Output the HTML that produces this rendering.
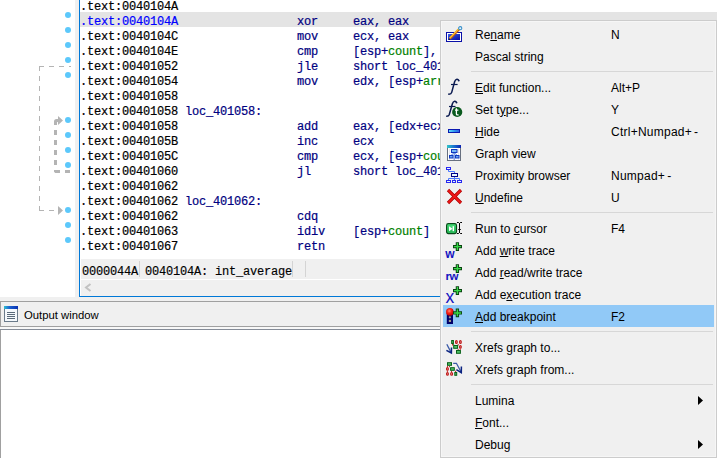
<!DOCTYPE html>
<html><head><meta charset="utf-8">
<style>
*{margin:0;padding:0;box-sizing:border-box}
html,body{width:717px;height:458px;overflow:hidden;background:#fff;position:relative}
.a{position:absolute}
#code{left:80px;top:0;width:637px;height:259px;background:#fff}
.row{position:absolute;left:80px;height:15px;width:637px;font-family:"Liberation Mono",monospace;font-size:12px;letter-spacing:-0.2px;line-height:15px;white-space:pre;color:#000;-webkit-text-stroke:0.2px}
.row span{position:absolute;top:3px}
.hl{background:#e4e4e4}
.ad{left:0}
.hlad{color:#0000ff}
.nv{color:#000080}
.gr{color:#008000}
.dot{position:absolute;left:65px;width:6px;height:6px;border-radius:50%;background:#5cc8fb}
.menu{left:440px;top:20px;width:277px;height:438px;background:#f0f0f0;border:1px solid #cccccc;box-shadow:inset 0 0 0 1px #f6f6f6;font-family:"Liberation Sans",sans-serif;font-size:12px;color:#000}
.mi{position:absolute;left:2px;width:271px;height:22px}
.mi .t{position:absolute;left:32px;top:4px;white-space:pre}
.mi .k{position:absolute;left:168px;top:4px;white-space:pre}
.mi u{text-decoration:underline;text-decoration-thickness:1px;text-underline-offset:1px}
.sep{position:absolute;left:30px;width:242px;height:1px;background:#d7d7d7}
.ic{position:absolute;overflow:visible}
.hi{background:#91c9f7}
.arr{position:absolute;left:255px;top:7px}
.mi{line-height:22px}
.mi .t,.mi .k{top:1px}
</style></head><body>
<!-- left gray strip and blue border -->
<div class="a" style="left:75px;top:0;width:4px;height:301px;background:#f0f0f0"></div>
<div class="a" style="left:79px;top:0;width:1px;height:297px;background:#0078d7"></div>
<div class="a" style="left:79px;top:296px;width:638px;height:1px;background:#0078d7"></div>
<!-- status bar -->
<div class="a" style="left:81px;top:259px;width:636px;height:20px;background:#f0f0f0"></div>
<div class="a" style="left:81px;top:280px;width:636px;height:16px;background:#f0f0f0"></div>
<div class="a" style="left:139px;top:261px;width:1px;height:16px;background:#d4d4d4"></div>
<div class="a" style="left:292px;top:261px;width:1px;height:16px;background:#d4d4d4"></div>
<div class="a" style="left:305px;top:261px;width:1px;height:16px;background:#d4d4d4"></div>
<div class="a" style="left:82px;top:265px;font-family:'Liberation Mono',monospace;font-size:12px;letter-spacing:-0.2px;font-weight:normal;-webkit-text-stroke:0.15px #000;line-height:15px;white-space:pre;color:#000">0000044A</div>
<div class="a" style="left:145px;top:265px;font-family:'Liberation Mono',monospace;font-size:12px;letter-spacing:-0.2px;font-weight:normal;-webkit-text-stroke:0.15px #000;line-height:15px;white-space:pre;color:#000">0040104A: int_average</div>
<svg class="a" style="left:84px;top:283px" width="8" height="9"><path d="M6.5 1 L2 4.5 L6.5 8" fill="none" stroke="#c2c2c2" stroke-width="2"/></svg>

<!-- code rows -->
<div class="row" style="top:-3px"><span class="ad">.text:0040104A</span></div>
<div class="row hl" style="top:12px"><span class="ad hlad">.text:0040104A</span><span class="nv" style="left:217px">xor</span><span class="nv" style="left:273px">eax, eax</span></div>
<div class="row" style="top:27px"><span class="ad">.text:0040104C</span><span class="nv" style="left:217px">mov</span><span class="nv" style="left:273px">ecx, eax</span></div>
<div class="row" style="top:42px"><span class="ad">.text:0040104E</span><span class="nv" style="left:217px">cmp</span><span class="nv" style="left:273px">[esp+<span class="gr" style="position:static">count</span>], 0</span></div>
<div class="row" style="top:57px"><span class="ad">.text:00401052</span><span class="nv" style="left:217px">jle</span><span class="nv" style="left:273px">short loc_401062</span></div>
<div class="row" style="top:72px"><span class="ad">.text:00401054</span><span class="nv" style="left:217px">mov</span><span class="nv" style="left:273px">edx, [esp+<span class="gr" style="position:static">arr</span>]</span></div>
<div class="row" style="top:87px"><span class="ad">.text:00401058</span></div>
<div class="row" style="top:102px"><span class="ad">.text:00401058</span><span class="nv" style="left:105px">loc_401058:</span></div>
<div class="row" style="top:117px"><span class="ad">.text:00401058</span><span class="nv" style="left:217px">add</span><span class="nv" style="left:273px">eax, [edx+ecx*4]</span></div>
<div class="row" style="top:132px"><span class="ad">.text:0040105B</span><span class="nv" style="left:217px">inc</span><span class="nv" style="left:273px">ecx</span></div>
<div class="row" style="top:147px"><span class="ad">.text:0040105C</span><span class="nv" style="left:217px">cmp</span><span class="nv" style="left:273px">ecx, [esp+<span class="gr" style="position:static">count</span>]</span></div>
<div class="row" style="top:162px"><span class="ad">.text:00401060</span><span class="nv" style="left:217px">jl</span><span class="nv" style="left:273px">short loc_401058</span></div>
<div class="row" style="top:177px"><span class="ad">.text:00401062</span></div>
<div class="row" style="top:192px"><span class="ad">.text:00401062</span><span class="nv" style="left:105px">loc_401062:</span></div>
<div class="row" style="top:207px"><span class="ad">.text:00401062</span><span class="nv" style="left:217px">cdq</span></div>
<div class="row" style="top:222px"><span class="ad">.text:00401063</span><span class="nv" style="left:217px">idiv</span><span class="nv" style="left:273px">[esp+<span class="gr" style="position:static">count</span>]</span></div>
<div class="row" style="top:237px"><span class="ad">.text:00401067</span><span class="nv" style="left:217px">retn</span></div>

<!-- dots -->
<div class="dot" style="top:12px"></div>
<div class="dot" style="top:27px"></div>
<div class="dot" style="top:42px"></div>
<div class="dot" style="top:57px"></div>
<div class="dot" style="top:72px"></div>
<div class="dot" style="top:117px"></div>
<div class="dot" style="top:132px"></div>
<div class="dot" style="top:147px"></div>
<div class="dot" style="top:162px"></div>
<div class="dot" style="top:207px"></div>
<div class="dot" style="top:222px"></div>
<div class="dot" style="top:237px"></div>

<!-- arrows -->
<svg class="a" style="left:0;top:0" width="75" height="260">
  <g fill="#b4b4b4">
    <!-- outer dashed 1px -->
    <rect x="39" y="66" width="5" height="1"/><rect x="49" y="66" width="5" height="1"/><rect x="59" y="66" width="5" height="1"/><rect x="69" y="66" width="2" height="1"/>
    <rect x="39" y="66" width="1" height="5"/>
    <rect x="39" y="76" width="1" height="5"/><rect x="39" y="86" width="1" height="5"/><rect x="39" y="96" width="1" height="5"/><rect x="39" y="106" width="1" height="5"/><rect x="39" y="116" width="1" height="5"/><rect x="39" y="126" width="1" height="5"/><rect x="39" y="136" width="1" height="5"/><rect x="39" y="146" width="1" height="5"/><rect x="39" y="156" width="1" height="5"/><rect x="39" y="166" width="1" height="5"/><rect x="39" y="176" width="1" height="5"/><rect x="39" y="186" width="1" height="5"/><rect x="39" y="196" width="1" height="5"/><rect x="39" y="206" width="1" height="5"/>
    <rect x="39" y="210" width="5" height="1"/><rect x="49" y="210" width="5" height="1"/>
    <path d="M58 206 L63 210.5 L58 215 Z"/>
    <!-- inner thick dashed -->
    <path d="M54 125 L54 121.5 Q54 119 56.5 119 L58 119 L58 122 L57.5 122 Q57 122 57 122.5 L57 125 Z"/>
    <path d="M58 116 L63 120.5 L58 125 Z"/>
    <rect x="54" y="130" width="3" height="5"/><rect x="54" y="140" width="3" height="5"/><rect x="54" y="150" width="3" height="5"/><rect x="54" y="160" width="3" height="5"/>
    <path d="M54 170 L60 170 L60 173 L55.2 173 L54 171.8 Z"/><rect x="65" y="170" width="5" height="3"/>
  </g>
</svg>

<!-- output window -->
<div class="a" style="left:0;top:297px;width:717px;height:4px;background:#f0f0f0"></div>
<div class="a" style="left:0;top:301px;width:717px;height:1px;background:#a0a0a0"></div>
<div class="a" style="left:0;top:302px;width:717px;height:24px;background:#f0f0f0"></div>
<div class="a" style="left:0;top:301px;width:1px;height:26px;background:#a0a0a0"></div>
<div class="a" style="left:0;top:326px;width:717px;height:1px;background:#a0a0a0"></div>
<div class="a" style="left:0;top:327px;width:717px;height:2px;background:#f8f8f8"></div>
<div class="a" style="left:0;top:329px;width:717px;height:1px;background:#858c98"></div>
<div class="a" style="left:0;top:330px;width:1px;height:128px;background:#a0a0a0"></div>
<svg class="a" style="left:4px;top:306px" width="15" height="17">
  <rect x="0.5" y="0.5" width="13" height="15" fill="#f4f8fc" stroke="#6a7a8a"/>
  <defs><linearGradient id="og" x1="0" x2="1"><stop offset="0" stop-color="#30c0d0"/><stop offset="0.4" stop-color="#1a60d0"/><stop offset="1" stop-color="#0a30b0"/></linearGradient></defs><rect x="0" y="0" width="14" height="3" fill="url(#og)"/>
  <rect x="3" y="6" width="8" height="1" fill="#5a6a7a"/><rect x="3" y="8" width="8" height="1" fill="#5a6a7a"/><rect x="3" y="10" width="8" height="1" fill="#5a6a7a"/><rect x="3" y="12" width="8" height="1" fill="#5a6a7a"/>
</svg>
<div class="a" style="left:24px;top:309px;font-family:'Liberation Sans',sans-serif;font-size:11.3px;color:#000;white-space:pre">Output window</div>

<!-- context menu -->
<div class="a menu">
<div class="mi" style="top:2px"><svg class="ic" style="left:3px;top:3px" width="18" height="17" viewBox="0 0 18 17">
<defs><linearGradient id="rng" x1="0" y1="0" x2="1" y2="1"><stop offset="0" stop-color="#3a60e8"/><stop offset="1" stop-color="#0808a0"/></linearGradient></defs>
<rect x="0" y="6" width="16" height="10" fill="#0a10a8"/>
<rect x="1" y="7" width="14" height="8" fill="#fff"/>
<rect x="2" y="8" width="12" height="6" fill="url(#rng)"/>
<line x1="3.8" y1="12.6" x2="13.4" y2="3" stroke="#c85808" stroke-width="2.4"/>
<line x1="3.6" y1="12.2" x2="13.0" y2="2.6" stroke="#f8c030" stroke-width="1.4"/>
<path d="M2.6 14 L3 12.4 L4.4 13.4 Z" fill="#101010"/>
<circle cx="14.2" cy="2.2" r="1.6" fill="#e8f4ff" stroke="#3a90c8" stroke-width="1.1"/>
</svg><span class="t">Re<u>n</u>ame</span><span class="k">N</span></div>
<div class="mi" style="top:24px"><span class="t">Pascal string</span></div>
<div class="sep" style="top:50px"></div>
<div class="mi" style="top:55px"><svg class="ic" style="left:3px;top:3px" width="18" height="17" viewBox="0 0 18 17"><path d="M12.6 1.6 C12.4 -0.4, 9.6 -0.6, 8.6 2.8 L5.7 13.4 C5.3 14.8, 4 15.3, 2.2 15.1" stroke="#0a1a50" stroke-width="1.5" fill="none"/><circle cx="12.7" cy="1.6" r="0.95" fill="#0a1a50"/><path d="M5 5.5 L11.6 5.5" stroke="#0a1a50" stroke-width="1.2"/></svg><span class="t"><u>E</u>dit function...</span><span class="k">Alt+P</span></div>
<div class="mi" style="top:77px"><svg class="ic" style="left:3px;top:3px" width="18" height="17" viewBox="0 0 18 17"><path d="M10.4 1.6 C10.2 -0.4, 7.4 -0.6, 6.4 2.8 L3.2 13.8 C2.8 15, 1.8 15.4, 0.2 15.3" stroke="#0a1a50" stroke-width="1.5" fill="none"/><circle cx="10.5" cy="1.6" r="0.95" fill="#0a1a50"/><path d="M3 5.5 L9.5 5.5" stroke="#0a1a50" stroke-width="1.2"/><circle cx="11.2" cy="11" r="5.1" fill="#0a5a1e"/><path d="M10.4 7.2 L10.4 12.8 C10.4 13.8, 11.2 14.1, 12.6 13.8 M9 9.2 L12.4 9.2" stroke="#fff" stroke-width="1.3" fill="none"/></svg><span class="t">Set t<u>y</u>pe...</span><span class="k">Y</span></div>
<div class="mi" style="top:99px"><svg class="ic" style="left:3px;top:3px" width="18" height="17" viewBox="0 0 18 17">
<defs><linearGradient id="hg" x1="0" x2="1"><stop offset="0" stop-color="#60e0f8"/><stop offset="0.6" stop-color="#2a90f0"/><stop offset="1" stop-color="#3060e0"/></linearGradient></defs>
<rect x="2" y="6" width="12" height="4" fill="#0a18b0"/>
<rect x="3" y="7" width="10" height="2" fill="url(#hg)"/>
</svg><span class="t"><u>H</u>ide</span><span class="k"><span style="letter-spacing:0.25px">Ctrl+Numpad+</span><span style="margin-left:2px">-</span></span></div>
<div class="mi" style="top:121px"><svg class="ic" style="left:3px;top:3px" width="18" height="17" viewBox="0 0 18 17">
<defs><linearGradient id="tg" x1="0" x2="1"><stop offset="0" stop-color="#30c8c8"/><stop offset="0.5" stop-color="#1a70d0"/><stop offset="1" stop-color="#0a20b0"/></linearGradient></defs>
<rect x="1.5" y="0.5" width="13" height="15" fill="#fff" stroke="#687080"/>
<rect x="1" y="0" width="14" height="3" fill="url(#tg)"/>
<path d="M3.5 3.5 V15 M12.5 3.5 V15" stroke="#e4e8f0" stroke-width="1"/>
<path d="M8.2 7.5 L5 10.5 M8.2 7.5 L11.2 10.5 M8.2 7.5 V15" stroke="#5080e0" stroke-width="1" fill="none"/>
<rect x="5.5" y="4.5" width="5.5" height="3" fill="#78b8f4" stroke="#1038c0"/>
<rect x="3.5" y="10.5" width="3.5" height="2.5" fill="#6aa8f0" stroke="#1038c0"/>
<rect x="9.5" y="10.5" width="3.5" height="2.5" fill="#6aa8f0" stroke="#1038c0"/>
</svg><span class="t">Graph view</span></div>
<div class="mi" style="top:143px"><svg class="ic" style="left:3px;top:3px" width="18" height="17" viewBox="0 0 18 17">
<path d="M2.5 3 V4.5 H8.5 V6" stroke="#4a78ff" fill="none"/>
<path d="M8.5 10 V11.5 M2.5 13 V11.5 H13.5 V13 M8.5 11.5 V13" stroke="#4a78ff" fill="none"/>
<rect x="0.5" y="0.5" width="4" height="2" fill="#e8f8ff" stroke="#2828f0"/>
<rect x="5.5" y="6.5" width="6" height="3" fill="#e8f8ff" stroke="#000088"/>
<rect x="0.5" y="13.5" width="4" height="2" fill="#e8f8ff" stroke="#2828f0"/>
<rect x="6.5" y="13.5" width="3" height="2" fill="#e8f8ff" stroke="#2828f0"/>
<rect x="11.5" y="13.5" width="4" height="2" fill="#e8f8ff" stroke="#2828f0"/>
</svg><span class="t">Proximity browser</span><span class="k"><span style="letter-spacing:0.25px">Numpad+</span><span style="margin-left:2px">-</span></span></div>
<div class="mi" style="top:165px"><svg class="ic" style="left:3px;top:3px" width="18" height="17" viewBox="0 0 18 17">
<path d="M2 1 L15 14 M15 1 L2 14" stroke="#b00000" stroke-width="3.2"/>
<path d="M2.4 1.4 L14.6 13.6 M14.6 1.4 L2.4 13.6" stroke="#f01818" stroke-width="1.8"/>
</svg><span class="t"><u>U</u>ndefine</span><span class="k">U</span></div>
<div class="sep" style="top:191px"></div>
<div class="mi" style="top:196px"><svg class="ic" style="left:3px;top:4px" width="18" height="17" viewBox="0 0 18 17">
<defs><linearGradient id="rg" x1="0" y1="0" x2="0" y2="1"><stop offset="0" stop-color="#58e888"/><stop offset="1" stop-color="#18a848"/></linearGradient></defs>
<rect x="0.6" y="2.6" width="9.9" height="10" rx="1.8" fill="url(#rg)" stroke="#0a4a1a" stroke-width="1.2"/>
<rect x="1.8" y="3.8" width="7.5" height="7.6" rx="0.8" fill="none" stroke="#30c060" stroke-width="0.8"/>
<path d="M3 5.2 L6.6 7.7 L3 10.2 Z" fill="#fff"/>
<rect x="6.6" y="5.2" width="1.4" height="5" fill="#fff"/>
<path d="M11 1.5 H12.8 M14.2 1.5 H16 M13.5 2 V12 M11 12.5 H12.8 M14.2 12.5 H16 M12.3 8.5 H14.8" stroke="#000" stroke-width="1" fill="none"/>
</svg><span class="t">Run to <u>c</u>ursor</span><span class="k">F4</span></div>
<div class="mi" style="top:218px"><svg class="ic" style="left:3px;top:3px" width="18" height="19" viewBox="0 0 18 19"><path d="M11.4 0.2 V8.9 M7 4.65 H16" stroke="#0a4010" stroke-width="3.3"/>
<path d="M11.4 1.1 V8.0 M7.9 4.65 H15.1" stroke="#38d848" stroke-width="1.4"/><text x="-0.8" y="16" font-family="Liberation Sans" font-weight="bold" font-size="12" fill="#1414c0">w</text></svg><span class="t">Add <u>w</u>rite trace</span></div>
<div class="mi" style="top:240px"><svg class="ic" style="left:3px;top:3px" width="18" height="19" viewBox="0 0 18 19"><path d="M11.4 0.2 V8.9 M7 4.65 H16" stroke="#0a4010" stroke-width="3.3"/>
<path d="M11.4 1.1 V8.0 M7.9 4.65 H15.1" stroke="#38d848" stroke-width="1.4"/><text x="-0.4" y="16" font-family="Liberation Sans" font-weight="bold" font-size="11.5" fill="#1414c0" letter-spacing="-0.5">rw</text></svg><span class="t">Add <u>r</u>ead/write trace</span></div>
<div class="mi" style="top:262px"><svg class="ic" style="left:3px;top:3px" width="18" height="19" viewBox="0 0 18 19"><text x="-0.6" y="16.6" font-family="Liberation Sans" font-size="17.5" fill="#1414c0">x</text><path d="M11.4 0.2 V8.9 M7 4.65 H16" stroke="#0a4010" stroke-width="3.3"/>
<path d="M11.4 1.1 V8.0 M7.9 4.65 H15.1" stroke="#38d848" stroke-width="1.4"/></svg><span class="t">Add e<u>x</u>ecution trace</span></div>
<div class="mi hi" style="top:284px"><svg class="ic" style="left:3px;top:3px" width="18" height="19" viewBox="0 0 18 19">
<defs><radialGradient id="bg" cx="0.42" cy="0.38" r="0.62"><stop offset="0" stop-color="#ff9080"/><stop offset="0.45" stop-color="#f82818"/><stop offset="1" stop-color="#c00000"/></radialGradient></defs>
<rect x="0.8" y="1.5" width="6.2" height="14.5" fill="#00006a"/>
<circle cx="3.9" cy="9.3" r="1.15" fill="#9a9a90"/>
<circle cx="3.9" cy="12.9" r="1.2" fill="#a8a088"/>
<circle cx="3.9" cy="3.9" r="3.8" fill="url(#bg)"/>
<path d="M11.4 0.5 V9.200000000000001 M7 4.95 H16" stroke="#0a4010" stroke-width="3.3"/>
<path d="M11.4 1.4000000000000001 V8.3 M7.9 4.95 H15.1" stroke="#38d848" stroke-width="1.4"/></svg><span class="t"><u>A</u>dd breakpoint</span><span class="k">F2</span></div>
<div class="sep" style="top:310px"></div>
<div class="mi" style="top:315px"><svg class="ic" style="left:3px;top:3px" width="18" height="17" viewBox="0 0 18 17"><path d="M6.5 5 V6.5 M12.2 5 V6.5 M12.2 10 V11 M14.3 9.7 V11" stroke="#c01818" stroke-width="0.9"/><path d="M7 5 L8.5 6.2" stroke="#108020" stroke-width="0.9"/><rect x="5.7" y="1.5" width="1.7000000000000002" height="3" fill="#50c068" stroke="#086018" stroke-width="1"/><rect x="9.6" y="1.6" width="1.6000000000000008" height="2.8" rx="1" fill="#fff" stroke="#c01818" stroke-width="1.2"/><rect x="13.6" y="1.6" width="1.6000000000000008" height="2.8" rx="1" fill="#fff" stroke="#c01818" stroke-width="1.2"/><rect x="7.7" y="6.5" width="3.8999999999999995" height="2.8000000000000007" fill="#50c068" stroke="#086018" stroke-width="1"/><rect x="13.6" y="6.6" width="1.6000000000000008" height="2.6000000000000005" rx="1" fill="#fff" stroke="#c01818" stroke-width="1.2"/><rect x="10.5" y="11.5" width="3.9000000000000004" height="2.8000000000000007" fill="#50c068" stroke="#086018" stroke-width="1"/><path d="M0.8 5.2 L5.2 13.6" stroke="#3a5aa8" stroke-width="1.3"/><path d="M0.4 11.3 L5.4 14 L5.5 8.4" stroke="#0a2280" stroke-width="1.5" fill="none"/></svg><span class="t">Xrefs graph to...</span></div>
<div class="mi" style="top:337px"><svg class="ic" style="left:3px;top:3px" width="18" height="17" viewBox="0 0 18 17"><path d="M1.5 4.7 V6 M3.5 4.7 V6.2 M1.4 9.7 V11 M5.5 9.7 V11 M9.6 9.7 V11" stroke="#c01818" stroke-width="0.9"/><rect x="1.5" y="1.7" width="4" height="2.5999999999999996" fill="#50c068" stroke="#086018" stroke-width="1"/><rect x="0.6" y="6.6" width="1.7" height="2.6000000000000005" rx="1" fill="#fff" stroke="#c01818" stroke-width="1.2"/><rect x="4.6" y="6.7" width="3.700000000000001" height="2.6000000000000005" fill="#50c068" stroke="#086018" stroke-width="1"/><rect x="0.6" y="11.6" width="1.7" height="2.6000000000000005" rx="1" fill="#fff" stroke="#c01818" stroke-width="1.2"/><rect x="4.699999999999999" y="11.6" width="1.8" height="2.6000000000000005" rx="1" fill="#fff" stroke="#c01818" stroke-width="1.2"/><rect x="8.8" y="11.5" width="1.8999999999999986" height="2.8000000000000007" fill="#50c068" stroke="#086018" stroke-width="1"/><path d="M7.2 2.3 H10.4 L15 10.8" stroke="#3a5aa8" stroke-width="1.3" fill="none"/><path d="M10.4 8.6 L15.3 11.6 L15.4 5.6" stroke="#0a2280" stroke-width="1.5" fill="none"/></svg><span class="t">Xrefs graph from...</span></div>
<div class="sep" style="top:363px"></div>
<div class="mi" style="top:368px"><span class="t">Lumina</span><svg class="arr" width="5" height="9"><path d="M0 0 L5 4.5 L0 9 Z" fill="#000"/></svg></div>
<div class="mi" style="top:390px"><span class="t"><u>F</u>ont...</span></div>
<div class="mi" style="top:412px"><span class="t">Debug</span><svg class="arr" width="5" height="9"><path d="M0 0 L5 4.5 L0 9 Z" fill="#000"/></svg></div>
</div>
</body></html>
